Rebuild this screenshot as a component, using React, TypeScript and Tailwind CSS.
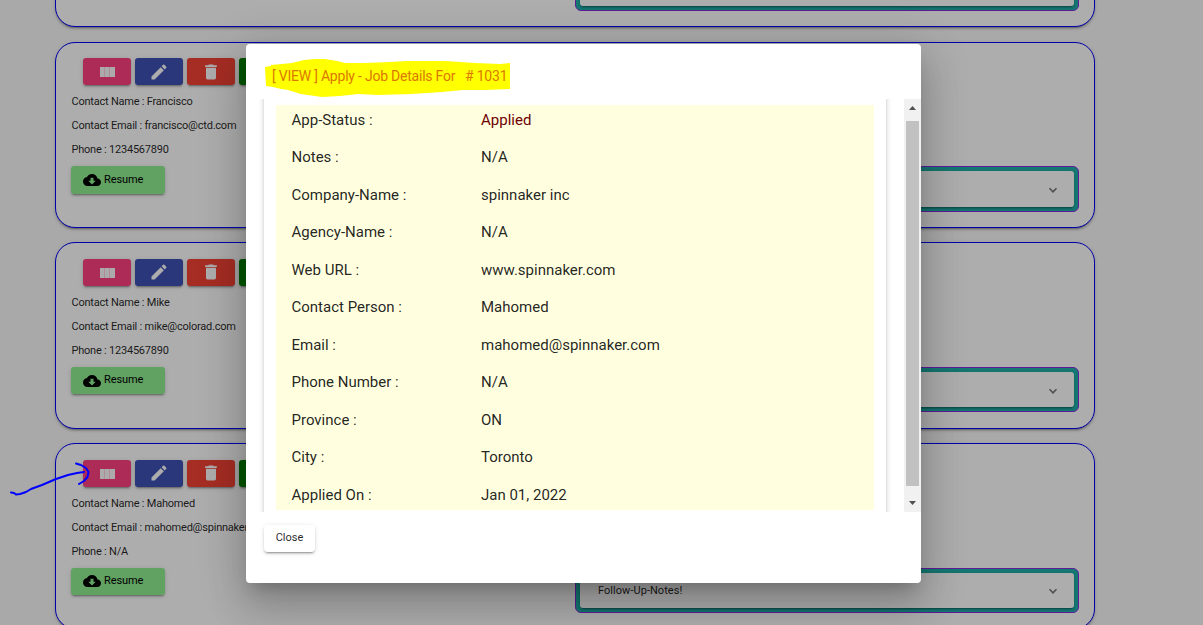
import React from "react";

const contacts = [
  { name: "Francisco", email: "francisco@ctd.com", phone: "1234567890" },
  { name: "Mike", email: "mike@colorad.com", phone: "1234567890" },
  { name: "Mahomed", email: "mahomed@spinnaker.com", phone: "N/A" },
];

const details: [string, string][] = [
  ["App-Status :", "Applied"],
  ["Notes :", "N/A"],
  ["Company-Name :", "spinnaker inc"],
  ["Agency-Name :", "N/A"],
  ["Web URL :", "www.spinnaker.com"],
  ["Contact Person :", "Mahomed"],
  ["Email :", "mahomed@spinnaker.com"],
  ["Phone Number :", "N/A"],
  ["Province :", "ON"],
  ["City :", "Toronto"],
  ["Applied On :", "Jan 01, 2022"],
];

const raised =
  "shadow-[0_3px_1px_-2px_rgba(0,0,0,0.2),0_2px_2px_0_rgba(0,0,0,0.14),0_1px_5px_0_rgba(0,0,0,0.12)]";

const cardFrame = `flex h-[186.2px] w-[1040px] shrink-0 rounded-[20px] border border-[#0000ff] bg-white px-[15px] ${raised}`;

const icons = {
  edit: "M3 17.25V21h3.75L17.81 9.94l-3.75-3.75L3 17.25zM20.71 7.04c.39-.39.39-1.02 0-1.41l-2.34-2.34c-.39-.39-1.02-.39-1.41 0l-1.83 1.83 3.75 3.75 1.83-1.83z",
  trash: "M6 19c0 1.1.9 2 2 2h8c1.1 0 2-.9 2-2V7H6v12zM19 4h-3.5l-1-1h-5l-1 1H5v2h14V4z",
  cloud:
    "M19.35 10.04C18.67 6.59 15.64 4 12 4 9.11 4 6.6 5.64 5.35 8.04 2.34 8.36 0 10.91 0 14c0 3.31 2.69 6 6 6h13c2.76 0 5-2.24 5-5 0-2.64-2.05-4.78-4.65-4.96zM17 13l-5 5-5-5h3V9h4v4h3z",
};

function Icon({ d, className }: { d: string; className: string }) {
  return (
    <svg viewBox="0 0 24 24" fill="currentColor" className={className}>
      <path d={d} />
    </svg>
  );
}

function ColumnsIcon() {
  return (
    <svg viewBox="0 0 15 10" className="mt-px h-[10px] w-[15px]" fill="#ffffff">
      <path d="M0 0H15V10H0Z" fillOpacity="0.75" />
      <path d="M0 0H4V10H0ZM5 0H9V10H5ZM10 0H15V10H10Z" fillOpacity="0.9" />
    </svg>
  );
}

function ActionButton({ color, children }: { color: string; children?: React.ReactNode }) {
  return (
    <button className={`flex h-[27px] w-12 items-center justify-center rounded-[3px] text-white ${raised} ${color}`}>
      {children}
    </button>
  );
}

function NotesPanel({ label }: { label?: string }) {
  return (
    <div className="mt-[123.6px] ml-auto h-[45.4px] w-[504px] rounded-[6px] border border-[#8a2be2] bg-[#20b2aa] p-1">
      <div
        className={`flex h-[35.4px] items-center rounded-[3px] bg-white pr-4 pl-[18px] text-[11px] text-black/87 ${raised}`}
      >
        {label && <span className="pt-px tracking-[0.004em]">{label}</span>}
        <svg viewBox="0 0 10 7" className="mt-[3px] ml-auto h-[7px] w-[10px]" fill="none" stroke="#757575" strokeWidth="1.6">
          <path d="M1.5 1.3 5 4.8 8.5 1.3" />
        </svg>
      </div>
    </div>
  );
}

function ContactCard({ name, email, phone }: { name: string; email: string; phone: string }) {
  return (
    <section className={cardFrame}>
      <div className="flex flex-col items-start pt-[15.6px] text-[11px] whitespace-nowrap text-black/87">
        <div className="ml-3 flex gap-1">
          <ActionButton color="bg-[#ff4081]">
            <ColumnsIcon />
          </ActionButton>
          <ActionButton color="bg-[#3f51b5]">
            <Icon d={icons.edit} className="size-5" />
          </ActionButton>
          <ActionButton color="bg-[#f44336]">
            <Icon d={icons.trash} className="size-5" />
          </ActionButton>
          <ActionButton color="bg-[#008000]" />
        </div>
        <div className="mt-[5.1px] pl-[0.5px] leading-[24px] tracking-[-0.02em]">
          <p>Contact Name : {name}</p>
          <p>Contact Email : {email}</p>
          <p>Phone : {phone}</p>
        </div>
        <button
          className={`mt-[4px] flex h-[27.4px] w-[94px] items-center rounded-[3px] bg-[#90ee90] pl-3 text-black ${raised}`}
        >
          <Icon d={icons.cloud} className="mr-[3px] h-[18px] w-[18px]" />
          <span className="tracking-[-0.01em] [font-weight:450]">Resume</span>
        </button>
      </div>
      <NotesPanel label="Follow-Up-Notes!" />
    </section>
  );
}

function JobDialog() {
  return (
    <div className="flex h-[539px] w-[675px] flex-col rounded-[4px] bg-white text-black/87 shadow-[0_11px_15px_-7px_rgba(0,0,0,0.2),0_24px_38px_3px_rgba(0,0,0,0.14),0_9px_46px_8px_rgba(0,0,0,0.12)]">
      <header className="relative h-[55px] shrink-0 pt-[20px] pl-[26px]">
        <svg viewBox="0 0 246 38" className="absolute top-[15px] left-[19px] h-[38px] w-[246px]" fill="#ffff00">
          <path d="M0 8 6 7V6L17 5 27 4 39 1 50 0H60L72 2 80 4H100L125 3 142 2 180 2 210 4 235 5 245 4V30L220 31 198 31 177 33 146 35 113 36 93 35 75 37 57 38 36 35 23 31 16 30 8 28 1 27Z" />
        </svg>
        <h2 className="relative text-[14px] leading-6 font-normal tracking-[-0.22px] whitespace-pre text-[#dc7800]">
          {"[ VIEW ] Apply - Job Details For   # 1031"}
        </h2>
      </header>
      <div className="flex h-[413px] shrink-0 overflow-hidden">
        <div className="flex w-[658px] overflow-hidden px-[18px]">
          <div className="-my-2 w-[622px] px-3 py-[13.7px] shadow-[0_2px_1px_-1px_rgba(0,0,0,0.2),0_1px_1px_0_rgba(0,0,0,0.14),0_1px_6px_0_rgba(0,0,0,0.2)]">
            <dl className="h-[405px] overflow-hidden bg-[#ffffe0] pl-[15.5px] text-[15px]">
              {details.map(([label, value], i) => (
                <div key={label} className="flex h-[37.5px] leading-[30px]">
                  <dt className="w-[189.5px]">{label}</dt>
                  <dd className={i === 0 ? "text-[#700000]" : ""}>{value}</dd>
                </div>
              ))}
            </dl>
          </div>
        </div>
        <div className="flex w-[17px] flex-col items-center bg-[#f1f1f1]">
          <svg viewBox="0 0 17 22" className="h-[22px] w-[17px] shrink-0" fill="#505050">
            <path d="M5 11 8.5 7 12 11Z" />
          </svg>
          <div className="h-[365px] w-[13px] shrink-0 bg-[#c1c1c1]" />
          <svg viewBox="0 0 17 26" className="h-[26px] w-[17px] shrink-0" fill="#505050">
            <path d="M5 15 8.5 19 12 15Z" />
          </svg>
        </div>
      </div>
      <footer className="pt-3 pl-[18px]">
        <button className={`h-[27px] w-[51px] rounded-[4px] bg-white text-[11px] [font-weight:450] ${raised}`}>
          Close
        </button>
      </footer>
    </div>
  );
}

export default function App() {
  return (
    <main className="relative h-[625px] w-[1203px] overflow-hidden bg-[#fafafa] font-[Roboto,sans-serif]">
      <div className="-mt-[159.25px] ml-[55px] flex flex-col gap-[14.6px]">
        <section className={cardFrame}>
          <NotesPanel />
        </section>
        {contacts.map((c) => (
          <ContactCard key={c.name} {...c} />
        ))}
      </div>
      <div className="absolute inset-0 flex items-start justify-center bg-black/32 pt-[44px] pr-[36px]">
        <JobDialog />
      </div>
      <svg
        viewBox="0 0 100 50"
        className="absolute top-[455px] left-0 h-[50px] w-[100px]"
        fill="none"
        stroke="#0000ff"
        strokeWidth="2"
        strokeLinecap="round"
        strokeLinejoin="round"
      >
        <path d="M11 37.5 14 38 16 39.5 20 39 26 37 31 34 42 30 56 24 68 20 77 18 84 17" />
        <path d="M76 8.5 81 10 86 13 88.5 17 87.5 22 84 26 79 29" />
      </svg>
    </main>
  );
}
